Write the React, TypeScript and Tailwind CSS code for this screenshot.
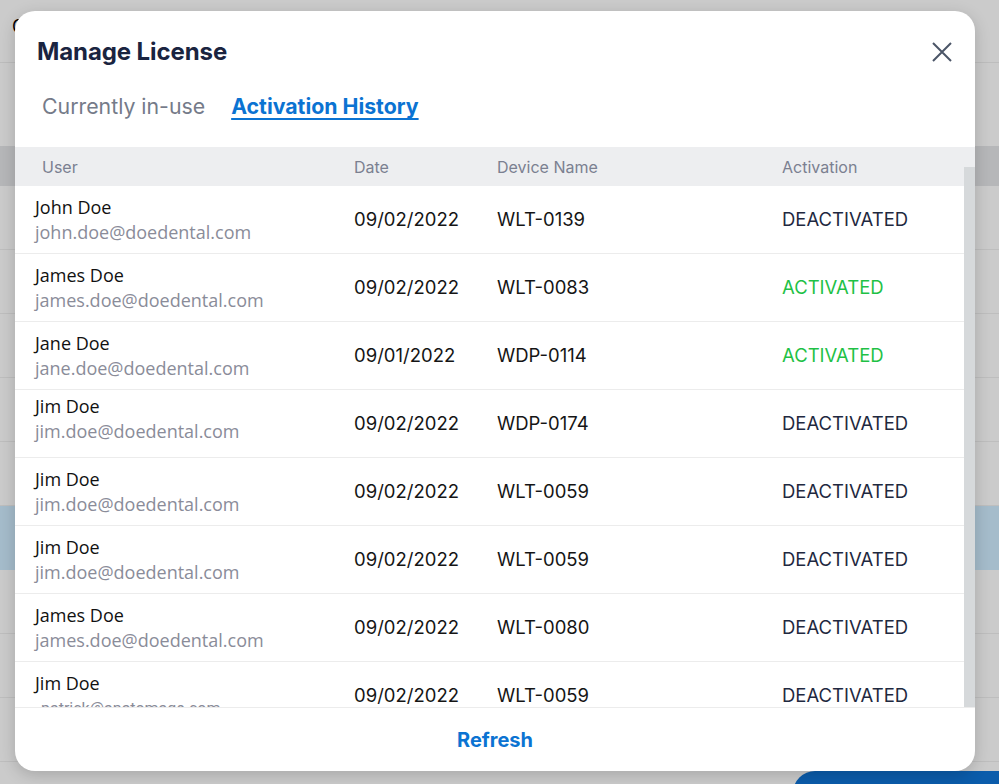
import React from "react";

// Manage License modal — Activation History tab, over a dimmed page

type Row = { name: string; email: string; date: string; device: string; status: "ACTIVATED" | "DEACTIVATED" };

const rows: Row[] = [
    { name: "John Doe", email: "john.doe@doedental.com", date: "09/02/2022", device: "WLT-0139", status: "DEACTIVATED" },
    { name: "James Doe", email: "james.doe@doedental.com", date: "09/02/2022", device: "WLT-0083", status: "ACTIVATED" },
    { name: "Jane Doe", email: "jane.doe@doedental.com", date: "09/01/2022", device: "WDP-0114", status: "ACTIVATED" },
    { name: "Jim Doe", email: "jim.doe@doedental.com", date: "09/02/2022", device: "WDP-0174", status: "DEACTIVATED" },
    { name: "Jim Doe", email: "jim.doe@doedental.com", date: "09/02/2022", device: "WLT-0059", status: "DEACTIVATED" },
    { name: "Jim Doe", email: "jim.doe@doedental.com", date: "09/02/2022", device: "WLT-0059", status: "DEACTIVATED" },
    { name: "James Doe", email: "james.doe@doedental.com", date: "09/02/2022", device: "WLT-0080", status: "DEACTIVATED" },
    { name: "Jim Doe", email: "patrick@anatomage.com", date: "09/02/2022", device: "WLT-0059", status: "DEACTIVATED" },
];

const inter = "font-['Inter',sans-serif]";
const openSans = "font-['Open_Sans',sans-serif]";

export default function App() {
    return (
        <div className={`relative w-[999px] h-[784px] overflow-hidden bg-[#cbcbcb] ${inter}`}>

            {/* page behind the dimmed overlay */}
            <div className="flex flex-col">
                <div className="h-[63px] pl-[12px] pt-[13px] text-[18px] text-black border-b border-[#bdbdbd]">Currently</div>
                <div className="h-[83px]" />
                <div className="h-[40px] bg-[#b6b7b9]" />
                {[0, 1, 2, 3, 4, 5, 6, 7, 8].map(i => (
                    <div key={i}
                        className={`h-[64px] border-b ${i === 5 ? "bg-[#a5bccb] border-[#a5bccb]" : "border-[#bebebe]"}`} />
                ))}
            </div>
            <div className="absolute right-0 top-[771px] w-[206px] h-[30px] rounded-tl-[22px] bg-[#0b5cab]" />

            {/* modal */}
            <div className="absolute left-[15px] top-[11px] w-[960px] h-[760px] rounded-[20px] bg-white overflow-hidden flex flex-col shadow-[0_4px_16px_rgba(0,0,0,0.18)]">

                {/* Header */}
                <div className="flex items-start justify-between pl-[22px] pr-[23px] pt-[25px]">
                    <h1 className="text-[24px] leading-[32px] font-bold text-[#1a2440] tracking-[-0.1px]">Manage License</h1>
                    <button className="mt-[6px] text-[#4b5567]">
                        <svg width="20" height="20" viewBox="0 0 20 20" fill="none" stroke="currentColor" strokeWidth="2">
                            <path d="M1 1 19 19M19 1 1 19" />
                        </svg>
                    </button>
                </div>

                {/* Tabs */}
                <div className="flex items-center gap-[26px] pl-[27px] mt-[24px] mb-[27px] text-[21.3px] leading-[28px]">
                    <span className="text-[#757b89]">Currently in-use</span>
                    <span className="font-bold text-[#0b73d2] underline underline-offset-[4px] decoration-2">Activation History</span>
                </div>

                {/* Table */}
                <div className="flex flex-1 min-h-0">
                    <div className="flex-1 flex flex-col min-w-0">
                        <div className="grid grid-cols-[339px_143px_285px_1fr] items-center h-[39px] bg-[#edeef0] text-[16px] text-[#7b8090]">
                            <span className="pl-[27px]">User</span>
                            <span>Date</span>
                            <span>Device Name</span>
                            <span>Activation</span>
                        </div>
                        <div className="flex-1 overflow-hidden">
                            {rows.map((r, i) => (
                                <div key={i} className="grid grid-cols-[339px_143px_285px_1fr] items-center h-[68px] border-b border-[#ececec]">
                                    <div className={`pl-[20px] flex flex-col text-[18px] leading-[25px] ${openSans} ${i === 3 ? "pb-[9px]" : ""}`}>
                                        <span className="text-[#111]">{r.name}</span>
                                        <span className={i === 7 ? "text-[#8a8c99] text-[16px] font-['Roboto',sans-serif] pl-[6px]" : "text-[#8a8c99]"}>{r.email}</span>
                                    </div>
                                    <span className="text-[18.5px] text-[#151515]">{r.date}</span>
                                    <span className="text-[18.5px] text-[#151515]">{r.device}</span>
                                    <span className={`text-[18.5px] ${r.status === "ACTIVATED" ? "text-[#1fc146]" : "text-[#1f2940]"}`}>{r.status}</span>
                                </div>
                            ))}
                        </div>
                    </div>
                    {/* scrollbar */}
                    <div className="w-[11px] flex flex-col">
                        <div className="h-[20px] bg-[#edeef0]" />
                        <div className="flex-1 bg-[#d6d9db]" />
                    </div>
                </div>

                {/* Footer */}
                <div className="h-[64px] border-t border-[#ececec] flex items-center justify-center">
                    <button className="text-[20px] font-bold text-[#0b73d2]">Refresh</button>
                </div>
            </div>
        </div>
    );
}
